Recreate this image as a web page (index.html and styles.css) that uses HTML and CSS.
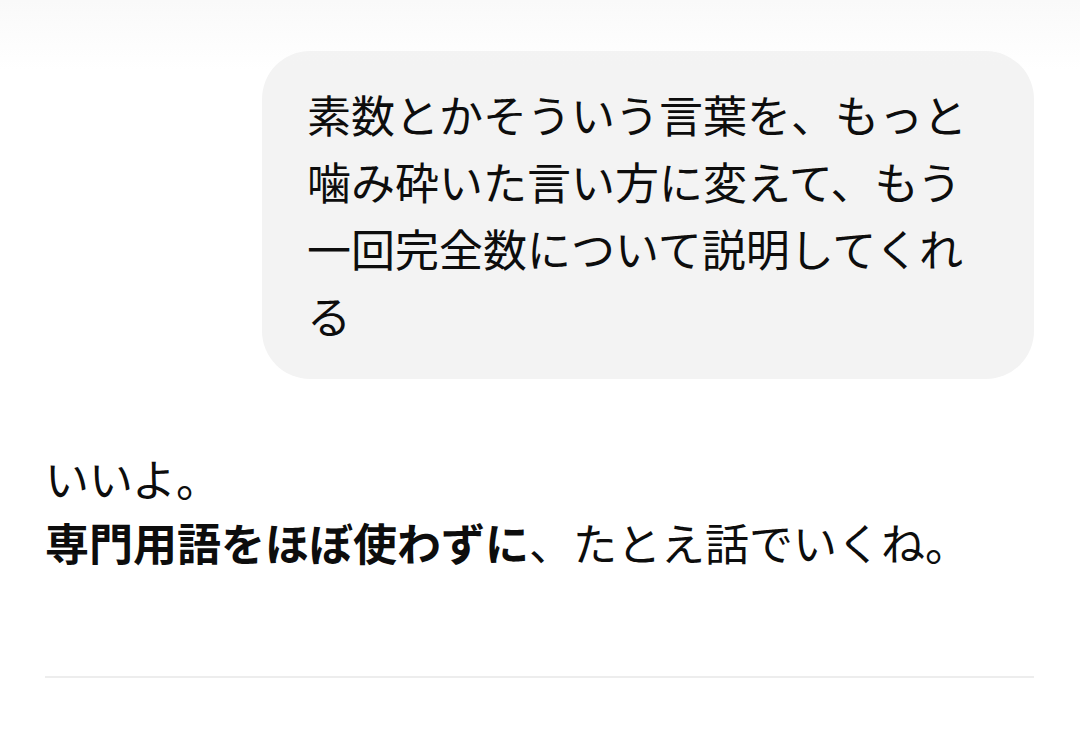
FILE: index.html
```html
<!DOCTYPE html>
<html lang="ja">
<head>
<meta charset="utf-8">
<link rel="stylesheet" href="styles.css">
</head>
<body>
<div class="top-fade"></div>
<main class="thread">
  <div class="user-row">
    <div class="bubble">素数とかそういう言葉を、もっと噛み砕いた言い方に変えて、もう一回完全数について説明してくれる</div>
  </div>
  <div class="assistant">
    <p class="line">いいよ。</p>
    <p class="line"><strong>専門用語をほぼ使わずに</strong>、たとえ話でいくね。</p>
  </div>
  <hr class="divider">
</main>
</body>
</html>
```

FILE: styles.css
```css
html, body {
  margin: 0;
  padding: 0;
  background: #ffffff;
}
body {
  width: 1080px;
  height: 733px;
  overflow: hidden;
  font-family: "Noto Sans CJK JP", "Noto Sans", sans-serif;
  color: #0d0d0d;
  position: relative;
}
.top-fade {
  position: absolute;
  left: 0;
  top: 0;
  width: 100%;
  height: 70px;
  background: linear-gradient(to bottom, rgba(244,244,244,0.55), rgba(255,255,255,0));
  pointer-events: none;
}
.thread {
  display: flex;
  flex-direction: column;
  padding: 51px 46px 0 45px;
}
.user-row {
  display: flex;
  justify-content: flex-end;
}
.bubble {
  box-sizing: border-box;
  width: 772px;
  background: #f3f3f3;
  border-radius: 48px;
  padding: 30px 45px;
  font-size: 44px;
  line-height: 67px;
}
.assistant {
  margin-top: 67px;
  font-size: 44px;
  line-height: 64px;
}
.line {
  margin: 0;
}
.line strong {
  font-weight: 700;
}
.divider {
  margin: 102px 0 0 0;
  border: 0;
  height: 2px;
  background: #ededed;
}
```
